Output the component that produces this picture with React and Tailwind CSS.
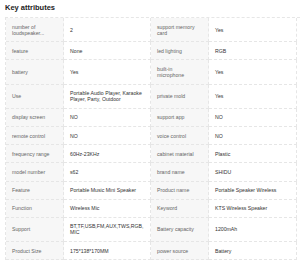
import React from 'react';

const rows = [
  ['number of loudspeaker...', '2', 'support memory card', 'Yes'],
  ['feature', 'None', 'led lighting', 'RGB'],
  ['battery', 'Yes', 'built-in microphone', 'Yes'],
  ['Use', 'Portable Audio Player, Karaoke Player, Party, Outdoor', 'private mold', 'Yes'],
  ['display screen', 'NO', 'support app', 'NO'],
  ['remote control', 'NO', 'voice control', 'NO'],
  ['frequency range', '60Hz-23KHz', 'cabinet material', 'Plastic'],
  ['model number', 's62', 'brand name', 'SHIDU'],
  ['Feature', 'Portable Music Mini Speaker', 'Product name', 'Portable Speaker Wireless'],
  ['Function', 'Wireless Mic', 'Keyword', 'KTS Wireless Speaker'],
  ['Support', <>BT,TF,USB,FM,AUX,TWS,RGB,<wbr />MIC</>, 'Battery capacity', '1200mAh'],
  ['Product Size', '175*138*170MM', 'power source', 'Battery'],
];

const Label = ({ children }) => (
  <div className="bg-[#f7f7f7] text-[#666] pl-[6px] pr-[10px] py-[5.6px] flex items-center border-b border-r border-dashed border-[#e6e6e6]">
    <span>{children}</span>
  </div>
);

const Value = ({ children }) => (
  <div className="text-[#333] px-[6px] py-[5.6px] flex items-center border-b border-r border-dashed border-[#e6e6e6]">
    <span>{children}</span>
  </div>
);

export default function App() {
  return (
    <div className="w-[300px] h-[265px] overflow-hidden bg-white pl-[5px] pt-[3px]" style={{ fontFamily: '"Liberation Sans", Arial, sans-serif' }}>
      <h2 className="text-[7.5px] leading-[9px] font-bold text-[#222] mb-[5px]">Key attributes</h2>
      <div className="grid grid-cols-[58px_87px_58px_88px] text-[5.2px] leading-[6px] border-t border-l border-dashed border-[#e6e6e6]">
        {rows.map((r, i) => (
          <React.Fragment key={i}>
            <Label>{r[0]}</Label>
            <Value>{r[1]}</Value>
            <Label>{r[2]}</Label>
            <Value>{r[3]}</Value>
          </React.Fragment>
        ))}
      </div>
    </div>
  );
}
